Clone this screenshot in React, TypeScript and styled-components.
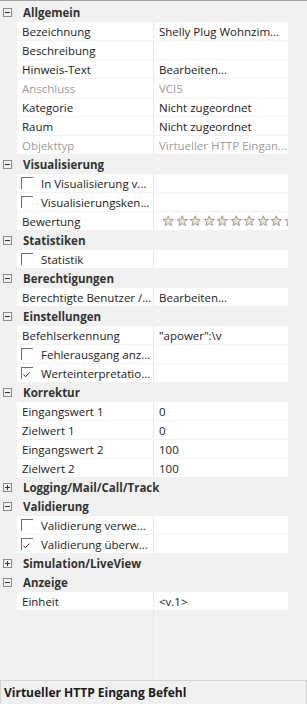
import styled, { createGlobalStyle } from 'styled-components';

const GlobalStyle = createGlobalStyle`
  html, body {
    margin: 0;
    padding: 0;
    background: #f1f1f1;
  }
  body {
    font-family: "Open Sans", "Noto Sans", "Liberation Sans", sans-serif;
    font-size: 11.5px;
    color: #1b1b1b;
  }
`;

const Window = styled.div`
  width: 307px;
  height: 704px;
  display: flex;
  flex-direction: column;
  background: #f1f1f1;
  overflow: hidden;
`;

const Grid = styled.div`
  flex: 1;
  display: flex;
  flex-direction: column;
  border-top: 1px solid #a3a3a3;
  padding-top: 2px;
`;

const CategoryRow = styled.div`
  height: 19px;
  display: flex;
  align-items: center;
  font-weight: 700;
  color: #333;
`;

const Expander = styled.span<{ $open: boolean }>`
  box-sizing: border-box;
  width: 9px;
  height: 9px;
  margin: 0 11px 0 3px;
  border: 1px solid #8a8a8a;
  position: relative;
  flex: none;

  &::before {
    content: '';
    position: absolute;
    left: 1px;
    right: 1px;
    top: 3px;
    height: 1px;
    background: #333;
  }

  &::after {
    content: '';
    display: ${(p) => (p.$open ? 'none' : 'block')};
    position: absolute;
    top: 1px;
    bottom: 1px;
    left: 3px;
    width: 1px;
    background: #333;
  }
`;

const PropRow = styled.div`
  display: grid;
  grid-template-columns: 136px 134px;
  column-gap: 1px;
  margin: 0 19px 1px 17px;
  height: 18px;
  background: #e9e9e9;
`;

const Cell = styled.div<{ $muted?: boolean }>`
  background: #fff;
  display: flex;
  align-items: center;
  padding-left: 5px;
  white-space: nowrap;
  overflow: hidden;
  color: ${(p) => (p.$muted ? '#9b9b9b' : '#1b1b1b')};
`;

const Box = styled.span`
  box-sizing: border-box;
  width: 12px;
  height: 12px;
  margin: 0 8px 0 -1px;
  border-top: 1px solid #6e6e6e;
  border-left: 1px solid #6e6e6e;
  flex: none;
  display: flex;
  align-items: flex-end;
  justify-content: flex-start;
`;

const Stars = styled.div`
  display: flex;
  gap: 1px;
  margin-left: 3px;
  flex: none;
`;

const Filler = styled.div`
  flex: 1;
  background: linear-gradient(to right, transparent 153px, #e6e6e6 153px, #e6e6e6 154px, transparent 154px);
`;

const Description = styled.div`
  height: 24px;
  box-sizing: border-box;
  border: 1px solid #d4d4d4;
  border-bottom: none;
  background: #f0f0f0;
  display: flex;
  align-items: center;
  padding-left: 3px;
  font-weight: 700;
  font-size: 12px;
  color: #1b1b1b;
`;

type Row =
  | { kind: 'cat'; label: string; open?: boolean }
  | { kind: 'prop'; name: string; value?: string; muted?: boolean; check?: boolean; stars?: boolean };

const rows: Row[] = [
  { kind: 'cat', label: 'Allgemein', open: true },
  { kind: 'prop', name: 'Bezeichnung', value: 'Shelly Plug Wohnzim...' },
  { kind: 'prop', name: 'Beschreibung' },
  { kind: 'prop', name: 'Hinweis-Text', value: 'Bearbeiten...' },
  { kind: 'prop', name: 'Anschluss', value: 'VCI5', muted: true },
  { kind: 'prop', name: 'Kategorie', value: 'Nicht zugeordnet' },
  { kind: 'prop', name: 'Raum', value: 'Nicht zugeordnet' },
  { kind: 'prop', name: 'Objekttyp', value: 'Virtueller HTTP Eingan...', muted: true },
  { kind: 'cat', label: 'Visualisierung', open: true },
  { kind: 'prop', name: 'In Visualisierung v...', check: false },
  { kind: 'prop', name: 'Visualisierungsken...', check: false },
  { kind: 'prop', name: 'Bewertung', stars: true },
  { kind: 'cat', label: 'Statistiken', open: true },
  { kind: 'prop', name: 'Statistik', check: false },
  { kind: 'cat', label: 'Berechtigungen', open: true },
  { kind: 'prop', name: 'Berechtigte Benutzer /...', value: 'Bearbeiten...' },
  { kind: 'cat', label: 'Einstellungen', open: true },
  { kind: 'prop', name: 'Befehlserkennung', value: '"apower":\\v' },
  { kind: 'prop', name: 'Fehlerausgang anz...', check: false },
  { kind: 'prop', name: 'Werteinterpretatio...', check: true },
  { kind: 'cat', label: 'Korrektur', open: true },
  { kind: 'prop', name: 'Eingangswert 1', value: '0' },
  { kind: 'prop', name: 'Zielwert 1', value: '0' },
  { kind: 'prop', name: 'Eingangswert 2', value: '100' },
  { kind: 'prop', name: 'Zielwert 2', value: '100' },
  { kind: 'cat', label: 'Logging/Mail/Call/Track', open: false },
  { kind: 'cat', label: 'Validierung', open: true },
  { kind: 'prop', name: 'Validierung verwe...', check: false },
  { kind: 'prop', name: 'Validierung überw...', check: true },
  { kind: 'cat', label: 'Simulation/LiveView', open: false },
  { kind: 'cat', label: 'Anzeige', open: true },
  { kind: 'prop', name: 'Einheit', value: '<v.1>' },
];

const Star = () => (
  <svg width="12.5" height="12" viewBox="0 0 12 12">
    <path
      d="M6 0.8 L7.5 4.3 L11.2 4.5 L8.3 6.9 L9.3 10.7 L6 8.6 L2.7 10.7 L3.7 6.9 L0.8 4.5 L4.5 4.3 Z"
      fill="#e6e2d8"
      stroke="#9c9589"
      strokeWidth="0.9"
      strokeLinejoin="round"
    />
  </svg>
);

const Check = ({ on }: { on: boolean }) => (
  <Box>
    {on && (
      <svg width="9" height="8" viewBox="0 0 9 8">
        <polyline points="1.5,3.5 3.5,5.8 7.5,1.5" fill="none" stroke="#333" strokeWidth="1" />
      </svg>
    )}
  </Box>
);

export default function App() {
  return (
    <Window>
      <GlobalStyle />
      <Grid>
        {rows.map((r, i) =>
          r.kind === 'cat' ? (
            <CategoryRow key={i}>
              <Expander $open={r.open !== false} />
              {r.label}
            </CategoryRow>
          ) : (
            <PropRow key={i}>
              <Cell $muted={r.muted}>
                {r.check !== undefined && <Check on={r.check} />}
                {r.name}
              </Cell>
              <Cell $muted={r.muted}>
                {r.stars ? (
                  <Stars>
                    {Array.from({ length: 10 }).map((_, k) => (
                      <Star key={k} />
                    ))}
                  </Stars>
                ) : (
                  r.value
                )}
              </Cell>
            </PropRow>
          )
        )}
        <Filler />
      </Grid>
      <Description>Virtueller HTTP Eingang Befehl</Description>
    </Window>
  );
}
